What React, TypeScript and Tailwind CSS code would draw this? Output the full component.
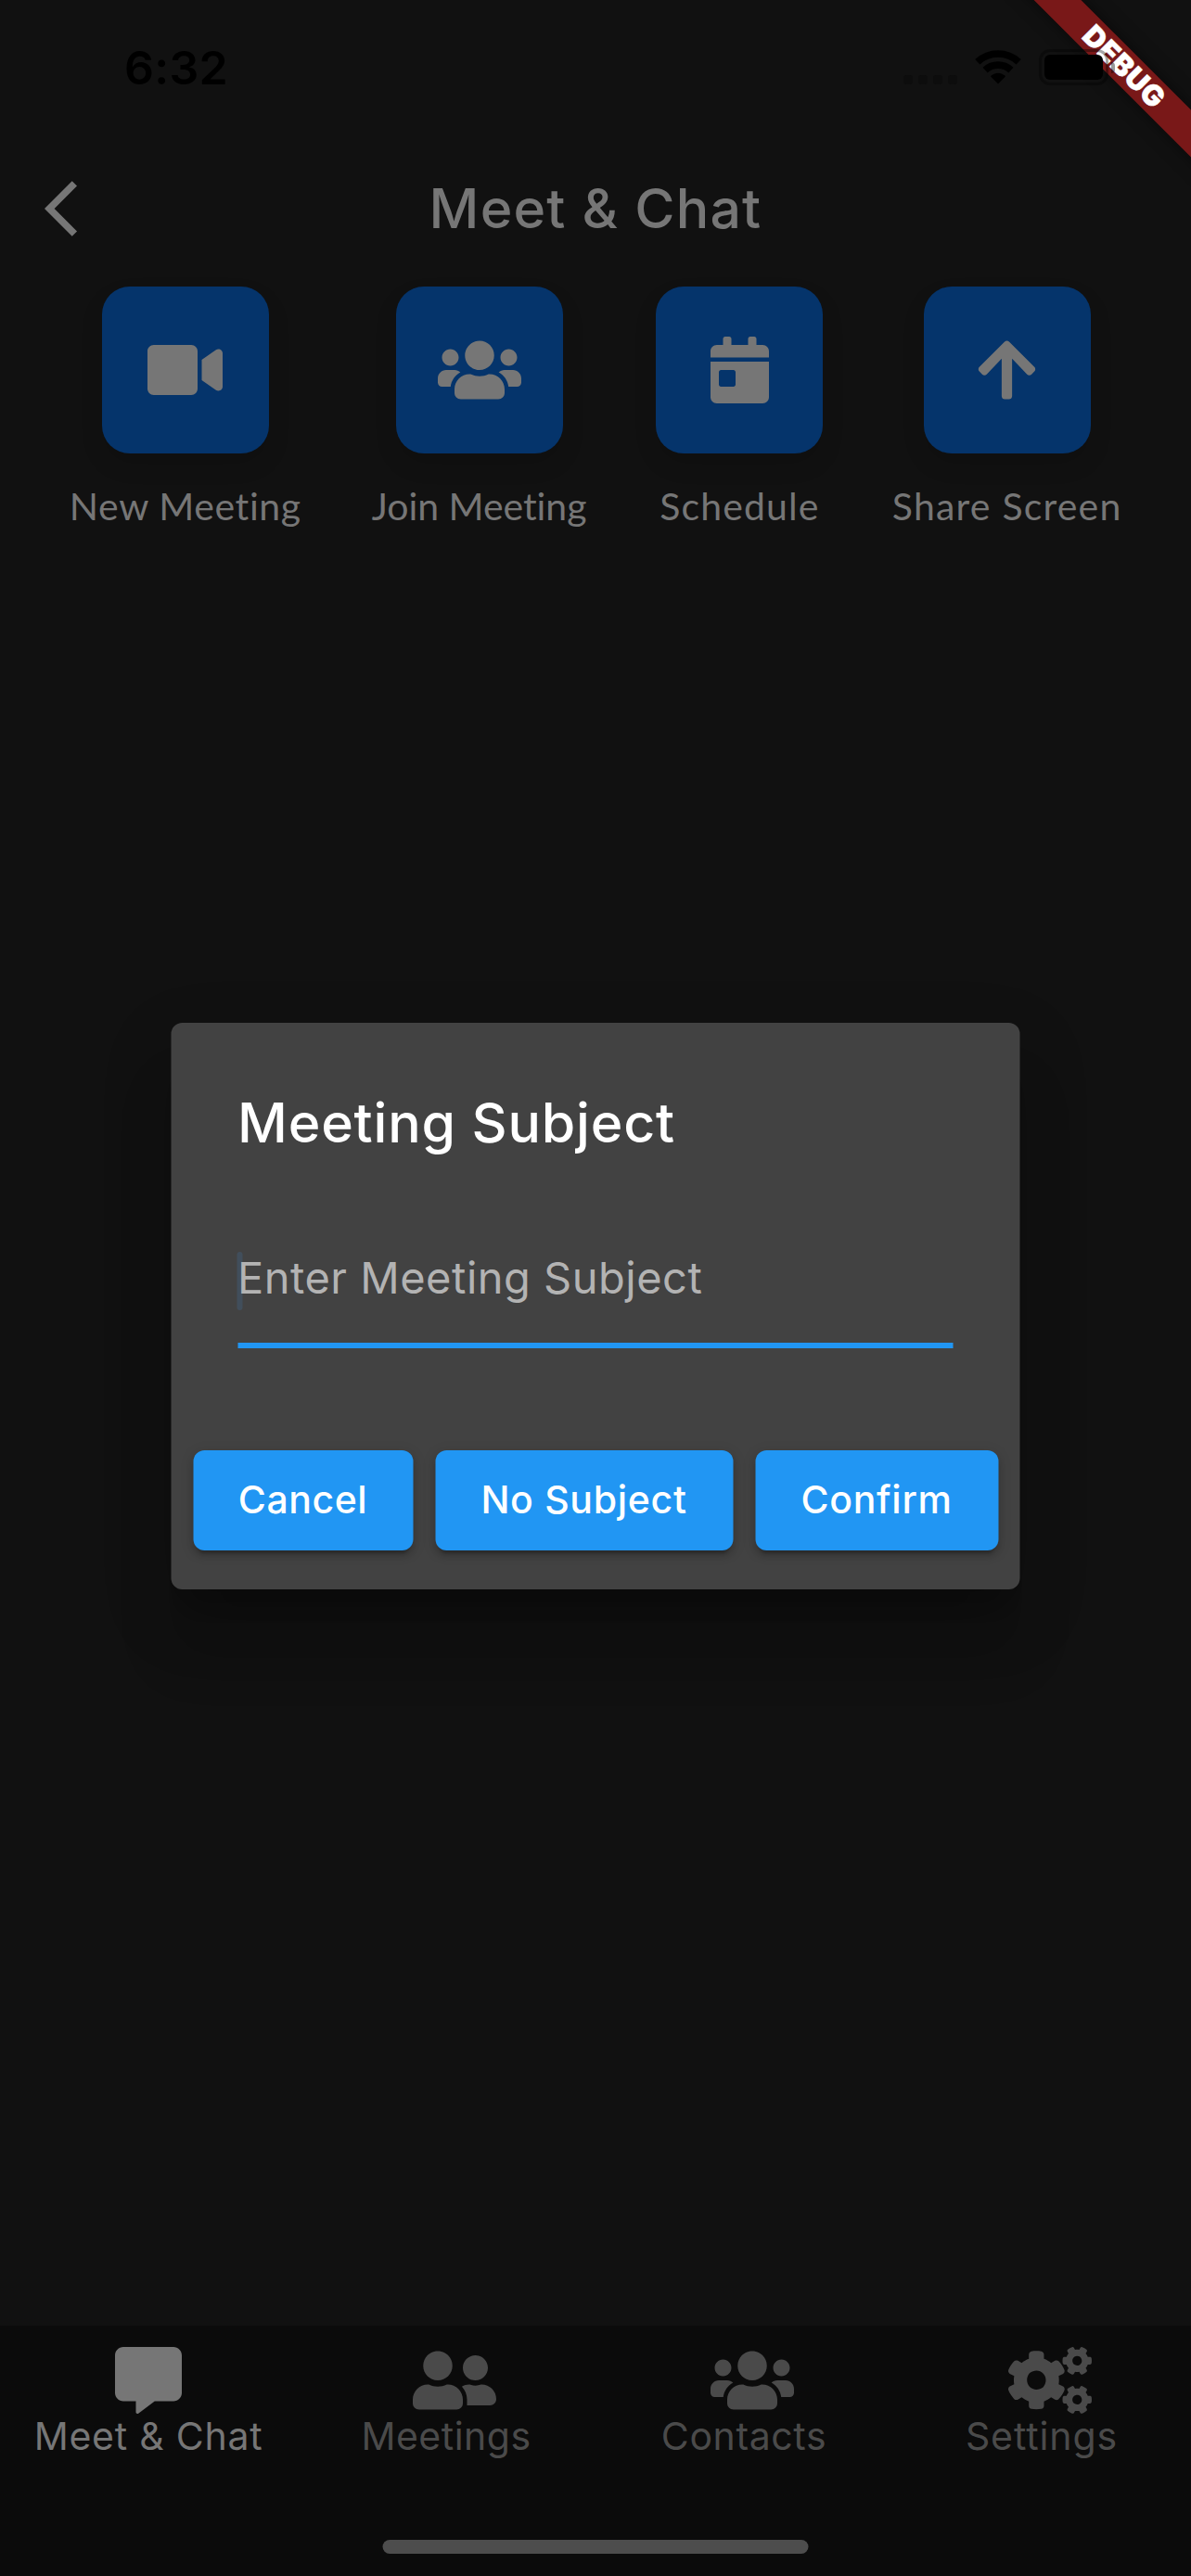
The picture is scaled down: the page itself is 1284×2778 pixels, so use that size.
import React from "react";
import {
  FaArrowUp,
  FaCalendarDay,
  FaCogs,
  FaCommentAlt,
  FaUserFriends,
  FaUsers,
  FaVideo,
} from "react-icons/fa";

const actions = [
  { label: "New Meeting", Icon: FaVideo, icon: "w-[81px]", col: "w-[252px]", text: "tracking-[0.6px]" },
  { label: "Join Meeting", Icon: FaUsers, icon: "w-[90px]", col: "w-[234px]", text: "tracking-[-0.05px]" },
  { label: "Schedule", Icon: FaCalendarDay, icon: "w-[63px]", col: "w-[180px]", text: "tracking-[1.1px]" },
  { label: "Share Screen", Icon: FaArrowUp, icon: "w-[63px]", col: "w-[249px]", text: "tracking-[1.2px]" },
];

const tabs = [
  { label: "Meet & Chat", Icon: FaCommentAlt, icon: "w-[72px]", color: "text-[#767676]", text: "tracking-[0.76px]" },
  { label: "Meetings", Icon: FaUserFriends, icon: "w-[90px]", color: "text-[#4a4a4a]", text: "tracking-[0.5px]" },
  { label: "Contacts", Icon: FaUsers, icon: "w-[90px]", color: "text-[#4a4a4a]", text: "tracking-[0.6px]" },
  { label: "Settings", Icon: FaCogs, icon: "w-[90px]", color: "text-[#4a4a4a]", text: "tracking-[0.9px]" },
];

const dialogButtons = [
  { label: "Cancel", size: "w-[237px] tracking-[0.55px]" },
  { label: "No Subject", size: "w-[321px] tracking-[0.69px]" },
  { label: "Confirm", size: "w-[262px] tracking-[0.69px]" },
];

function StatusBar() {
  return (
    <div className="relative z-30 flex h-[141px] items-start justify-between pt-[53px] pr-[82px] pl-[134px]">
      <div className="text-[50px] leading-[40px] font-semibold tracking-[0.25px] text-black">6:32</div>
      <div className="flex h-[39px] items-center">
        <div className="mt-[26px] mr-[19px] flex gap-[6px]">
          {[0, 1, 2, 3].map((i) => (
            <span key={i} className="size-[10px] rounded-[3px] bg-[#0d0d0d]" />
          ))}
        </div>
        <svg className="mr-[19px] h-[37px] w-[50px]" viewBox="0 0 50 37" fill="none" stroke="black" strokeWidth="7.6">
          <path d="M2.8 12.7A32.6 32.6 0 0 1 47.2 12.7" />
          <path d="M11.1 21.6A20.4 20.4 0 0 1 38.9 21.6" />
          <path d="M25 36.5L17.3 28.7Q16.8 28 17.6 27.4A11.7 11.7 0 0 1 32.4 27.4Q33.2 28 32.7 28.7Z" fill="black" stroke="none" />
        </svg>
        <div className="flex h-[39px] w-[75px] items-center rounded-[12px] border-[3px] border-black/35 px-[3px]">
          <div className="h-[27px] w-[63px] rounded-[6px] bg-black" />
        </div>
        <div className="ml-[3px] h-[12px] w-[4px] rounded-r-[4px] bg-black/40" />
      </div>
    </div>
  );
}

function AppBar() {
  return (
    <header className="relative flex h-[168px] items-center justify-center">
      <svg className="absolute left-[48px] h-[60px] w-[36px]" viewBox="0 2 12 20" fill="#767676">
        <path d="M11.67 3.87L9.9 2.1 0 12l9.9 9.9 1.77-1.77L3.54 12z" />
      </svg>
      <h1 className="text-[59px] leading-[72px] font-medium tracking-[1.2px] text-[#767676]">Meet &amp; Chat</h1>
    </header>
  );
}

function Dialog() {
  return (
    <div className="absolute inset-0 z-10 flex items-center justify-center pt-[141px] pb-[102px]">
      <div className="h-[611px] w-[915px] -translate-x-[0.5px] rounded-[12px] bg-[#424242] pt-[72px] shadow-[0_33px_23px_-21px_rgba(0,0,0,0.2),0_72px_60px_0px_rgba(0,0,0,0.14),0_27px_72px_8px_rgba(0,0,0,0.12)]">
        <div className="px-[72px]">
          <h2 className="text-[59px] leading-[72px] font-medium tracking-[0.82px] text-white">Meeting Subject</h2>
          <div className="relative mt-[101px] h-[106px] border-b-[6px] border-[#2196f3]">
            <span className="absolute top-[2px] -left-[1px] h-[63px] w-[6px] rounded-[3px] bg-[#414e5b]" />
            <div className="relative text-[47px] leading-[60px] tracking-[0.5px] text-[#b3b3b3]">Enter Meeting Subject</div>
          </div>
        </div>
        <div className="mt-[110px] flex justify-center gap-[24px] pl-[1px]">
          {dialogButtons.map(({ label, size }) => (
            <button
              key={label}
              className={`h-[108px] rounded-[12px] bg-[#2196f3] pb-[2px] text-[41px] leading-[48px] font-medium text-white shadow-[0_9px_3px_-6px_rgba(0,0,0,0.2),0_6px_6px_0_rgba(0,0,0,0.14),0_3px_15px_0_rgba(0,0,0,0.12)] ${size}`}
            >
              {label}
            </button>
          ))}
        </div>
      </div>
    </div>
  );
}

function DebugBanner() {
  return (
    <div className="absolute top-0 right-0 z-20 size-[240px] overflow-hidden">
      <div className="absolute top-[54px] left-[18px] flex h-[36px] w-[300px] rotate-45 items-center justify-center bg-[#791818] text-[31px] leading-[36px] font-black tracking-[0.6px] text-white shadow-[0_0_18px_rgba(0,0,0,0.5)] [-webkit-text-stroke:0.5px_white]">
        DEBUG
      </div>
    </div>
  );
}

export default function App() {
  return (
    <div className="relative flex h-[2778px] w-[1284px] flex-col overflow-hidden bg-[#111111] font-[Inter,sans-serif]">
      <StatusBar />
      <AppBar />
      <main className="flex flex-1 items-start justify-evenly">
        {actions.map(({ label, Icon, icon, col, text }) => (
          <div key={label} className={`flex flex-col items-center ${col}`}>
            <div className="flex size-[180px] items-center justify-center rounded-[30px] bg-[#05346b] text-[#767676] shadow-[0_12px_24px_rgba(0,0,0,0.12)]">
              <Icon className={`h-[72px] ${icon}`} />
            </div>
            <div className={`mt-[29px] font-[Lato,sans-serif] text-[41px] leading-[56px] whitespace-nowrap text-[#767676] [font-variant-ligatures:none] ${text}`}>
              {label}
            </div>
          </div>
        ))}
      </main>
      <nav className="relative flex h-[270px] bg-[#0b0b0b] pt-[23px]">
        {tabs.map(({ label, Icon, icon, color, text }) => (
          <div key={label} className={`flex flex-1 flex-col items-center pr-[1px] ${color}`}>
            <div className="flex size-[72px] justify-start">
              <Icon className={`h-[72px] shrink-0 ${icon}`} />
            </div>
            <div className={`text-[41px] leading-[49px] whitespace-nowrap ${text}`}>{label}</div>
          </div>
        ))}
        <div className="absolute bottom-[24px] left-1/2 h-[15px] w-[459px] -translate-x-1/2 rounded-full bg-[#4d4d4d]" />
      </nav>
      <Dialog />
      <DebugBanner />
    </div>
  );
}
